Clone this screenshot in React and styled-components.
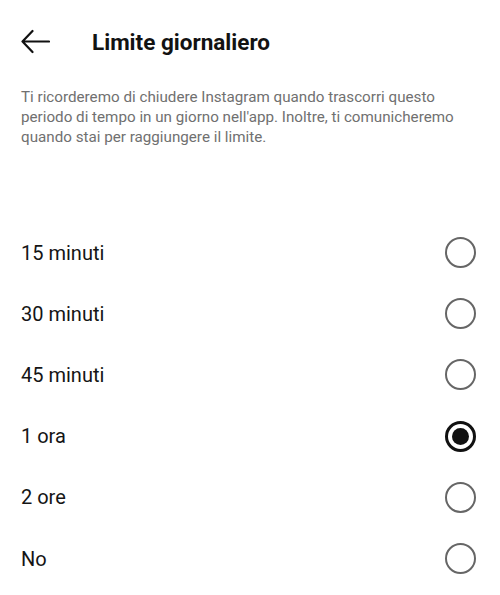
import React, { useState } from "react";
import styled, { createGlobalStyle } from "styled-components";

const GlobalStyle = createGlobalStyle`
  body {
    margin: 0;
    background: #fff;
    font-family: Roboto, "Noto Sans", sans-serif;
    color: #111;
  }
`;

const Screen = styled.div`
  width: 500px;
  height: 595px;
  overflow: hidden;
  background: #fff;
`;

const Header = styled.div`
  display: flex;
  align-items: center;
  height: 44px;
  padding: 20px 0 0 20px;
`;

const BackButton = styled.button`
  display: flex;
  align-items: center;
  justify-content: center;
  border: 0;
  background: none;
  padding: 0;
  width: 30px;
  height: 30px;
  margin-right: 42px;
  cursor: pointer;
`;

const Title = styled.h1`
  margin: 0;
  font-size: 22.5px;
  font-weight: 700;
  color: #121212;
`;

const Description = styled.p`
  margin: 23px 30px 0 21px;
  font-size: 15.2px;
  line-height: 20px;
  color: #707070;
`;

const Options = styled.div`
  display: flex;
  flex-direction: column;
  margin-top: 75px;
`;

const Row = styled.label`
  display: flex;
  align-items: center;
  justify-content: space-between;
  height: 61.2px;
  padding: 0 24px 0 21px;
  cursor: pointer;
`;

const Label = styled.span`
  font-size: 20px;
  color: #151515;
`;

const Radio = styled.span`
  box-sizing: border-box;
  width: 31px;
  height: 31px;
  border-radius: 50%;
  border: ${({ checked }) => (checked ? "3px solid #111" : "2px solid #666")};
  display: flex;
  align-items: center;
  justify-content: center;

  &::after {
    content: "";
    display: ${({ checked }) => (checked ? "block" : "none")};
    width: 17px;
    height: 17px;
    border-radius: 50%;
    background: #111;
  }
`;

const OPTIONS = ["15 minuti", "30 minuti", "45 minuti", "1 ora", "2 ore", "No"];

function ArrowLeft() {
  return (
    <svg width="30" height="30" viewBox="0 0 30 30" fill="none">
      <path
        d="M29 14.5H2.5M12.5 4L2.5 14.5l10 10.5"
        stroke="#111"
        strokeWidth="2.2"
        strokeLinecap="round"
        strokeLinejoin="round"
      />
    </svg>
  );
}

export default function App() {
  const [selected, setSelected] = useState("1 ora");

  return (
    <Screen>
      <GlobalStyle />
      <Header>
        <BackButton aria-label="Indietro">
          <ArrowLeft />
        </BackButton>
        <Title>Limite giornaliero</Title>
      </Header>
      <Description>
        Ti ricorderemo di chiudere Instagram quando trascorri questo periodo di
        tempo in un giorno nell'app. Inoltre, ti comunicheremo quando stai per
        raggiungere il limite.
      </Description>
      <Options>
        {OPTIONS.map((opt) => (
          <Row key={opt} onClick={() => setSelected(opt)}>
            <Label>{opt}</Label>
            <Radio checked={selected === opt} />
          </Row>
        ))}
      </Options>
    </Screen>
  );
}
